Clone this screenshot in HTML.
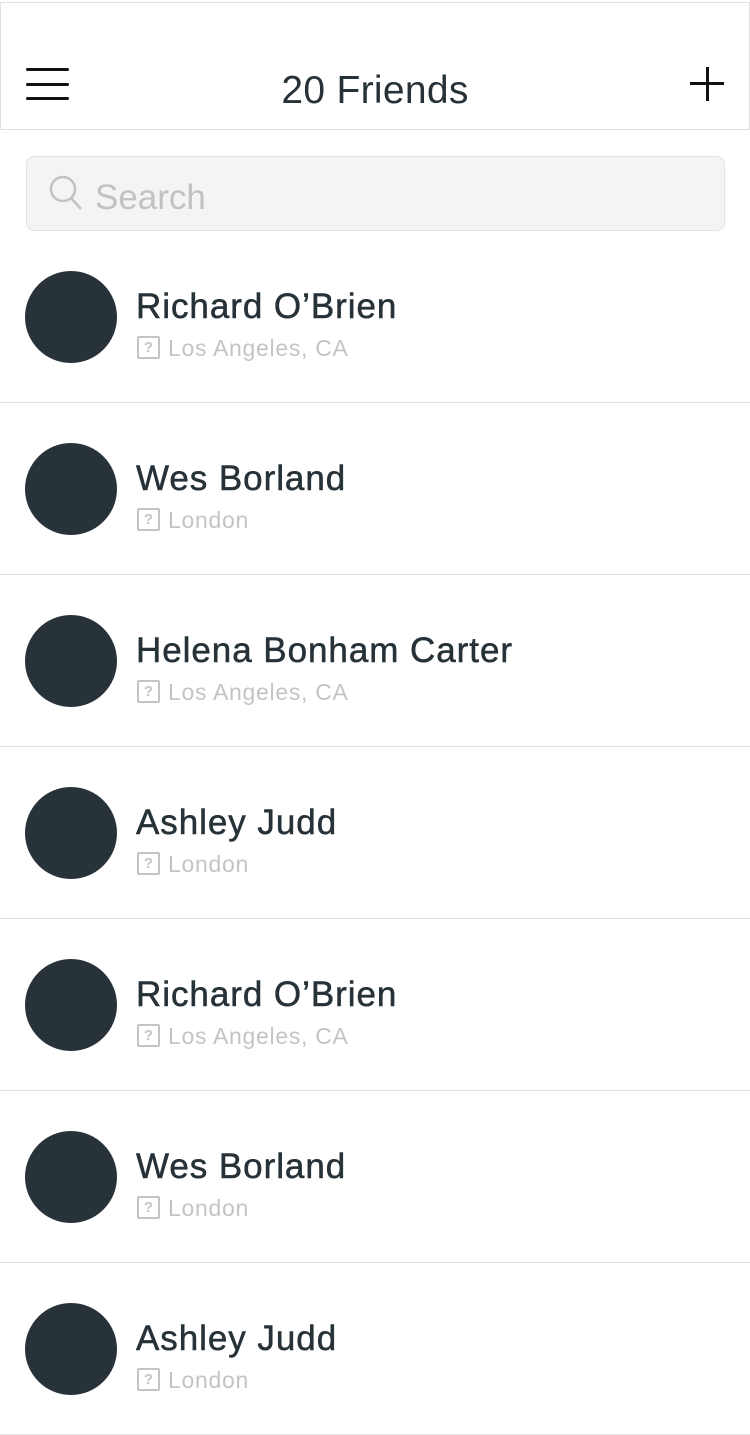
<!DOCTYPE html>
<html><head><meta charset="utf-8"><style>
*{margin:0;padding:0;box-sizing:border-box}
body{width:750px;height:1435px;background:#fff;font-family:"Liberation Sans",Helvetica,Arial,sans-serif;position:relative;overflow:hidden}
.hdr{position:absolute;left:0;top:2px;width:750px;height:128px;border:1px solid #e0e0e0}
.ham{position:absolute;left:26px;height:3px;width:43px;background:#111;border-radius:2px}
.title{position:absolute;left:0;width:750px;top:69px;text-align:center;font-size:39px;color:#263238;letter-spacing:0.3px}
.search{position:absolute;left:26px;top:156px;width:699px;height:75px;background:#f4f4f4;border:1px solid #e2e2e2;border-radius:8px}
.search span{position:absolute;left:68px;top:21px;font-size:35px;color:#c2c2c2}
.row{position:absolute;left:0;width:750px;height:172px;border-bottom:1px solid #e2e2e2}
.av{position:absolute;left:25px;top:40px;width:92px;height:92px;border-radius:50%;background:#283239}
.nm{position:absolute;left:136px;top:56px;font-size:35px;color:#263238;letter-spacing:0.95px;-webkit-text-stroke:0.5px #263238}
.loc{position:absolute;left:137px;top:105px;font-size:23px;color:#c4c4c4;line-height:24px;letter-spacing:0.7px}
.q{display:inline-block;width:23px;height:23px;border:2px solid #c4c4c4;border-radius:2px;font-size:15px;font-weight:bold;text-align:center;line-height:19px;vertical-align:top;margin-right:8px;letter-spacing:0}
</style></head><body>
<div class="hdr"></div>
<div class="ham" style="top:68px"></div>
<div class="ham" style="top:83px"></div>
<div class="ham" style="top:97px"></div>
<div style="position:absolute;left:690px;top:82px;width:34px;height:3px;background:#111"></div>
<div style="position:absolute;left:706px;top:67px;width:3px;height:34px;background:#111"></div>
<div class="title">20 Friends</div>
<div class="search">
<svg style="position:absolute;left:21px;top:17px" width="36" height="38" viewBox="0 0 36 38"><circle cx="15" cy="15" r="12" fill="none" stroke="#c2c2c2" stroke-width="2.5"/><line x1="23" y1="24" x2="33" y2="35" stroke="#c2c2c2" stroke-width="2.5"/></svg>
<span>Search</span></div>

<div class="row" style="top:231px"><div class="av"></div><div class="nm">Richard O’Brien</div><div class="loc"><span class="q">?</span>Los Angeles, CA</div></div>
<div class="row" style="top:403px"><div class="av"></div><div class="nm">Wes Borland</div><div class="loc"><span class="q">?</span>London</div></div>
<div class="row" style="top:575px"><div class="av"></div><div class="nm">Helena Bonham Carter</div><div class="loc"><span class="q">?</span>Los Angeles, CA</div></div>
<div class="row" style="top:747px"><div class="av"></div><div class="nm">Ashley Judd</div><div class="loc"><span class="q">?</span>London</div></div>
<div class="row" style="top:919px"><div class="av"></div><div class="nm">Richard O’Brien</div><div class="loc"><span class="q">?</span>Los Angeles, CA</div></div>
<div class="row" style="top:1091px"><div class="av"></div><div class="nm">Wes Borland</div><div class="loc"><span class="q">?</span>London</div></div>
<div class="row" style="top:1263px"><div class="av"></div><div class="nm">Ashley Judd</div><div class="loc"><span class="q">?</span>London</div></div>
</body></html>
